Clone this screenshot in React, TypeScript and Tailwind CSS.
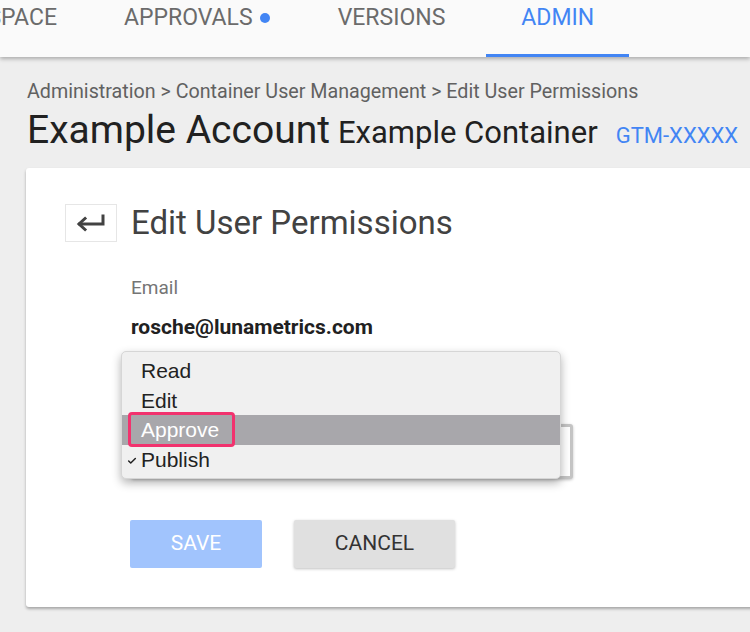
import { Check } from "lucide-react"

const tabs = [
  { label: "APPROVALS", dot: true },
  { label: "VERSIONS" },
  { label: "ADMIN", active: true },
]

const options = [
  { label: "Read" },
  { label: "Edit" },
  { label: "Approve", hover: true },
  { label: "Publish", checked: true },
]

function TopNav() {
  return (
    <div className="relative z-10 flex h-[57px] bg-[#fafafa] shadow-[0_2px_4px_rgba(0,0,0,0.28)]">
      <div className="flex w-[90px] shrink-0 justify-end pr-[33px] pt-[3px]">
        <span className="whitespace-nowrap text-[23px] leading-[30px] text-[#6b6b6b]">WORKSPACE</span>
      </div>
      {tabs.map((t) => (
        <div
          key={t.label}
          className={
            t.active
              ? "ml-[7px] flex items-start px-[35px] pt-[3px] border-b-[3px] border-[#4285f4]"
              : "flex items-start px-[34px] pt-[3px]"
          }
        >
          <span className={t.active ? "text-[23px] leading-[30px] text-[#4285f4]" : "text-[23px] leading-[30px] text-[#6b6b6b]"}>
            {t.label}
          </span>
          {t.dot && <span className="ml-[7px] mt-[10px] h-[10px] w-[10px] rounded-full bg-[#4285f4]" />}
        </div>
      ))}
    </div>
  )
}

function PermissionSelect() {
  return (
    <div className="relative ml-[95px] mt-[11px] h-[128px] w-[452px]">
      {/* the select box underneath the open menu */}
      <div className="absolute left-[10px] right-0 top-[73px] h-[55px] rounded-[3px] border-[3px] border-[#c4c4c4] bg-white shadow-[0_1px_3px_rgba(0,0,0,0.25)]" />

      {/* open menu */}
      <div
        className="absolute left-0 top-0 w-[440px] rounded-[5px] border border-[#d6d6d6] bg-[#f0f0f0] py-[4px] shadow-[0_4px_10px_rgba(0,0,0,0.3)]"
        style={{ fontFamily: '"Liberation Sans", Arial, sans-serif' }}
      >
        {options.map((o) => (
          <div
            key={o.label}
            className={
              o.hover
                ? "relative flex h-[29.5px] items-center bg-[#a8a7ab] pl-[19px] text-[21px] text-white"
                : "relative flex h-[29.5px] items-center pl-[19px] text-[21px] text-[#222222]"
            }
          >
            {o.checked && (
              <Check className="absolute left-[5px] top-[11px] h-[10px] w-[10px] text-[#222222]" strokeWidth={3.5} />
            )}
            {o.label}
            {o.hover && (
              <span className="pointer-events-none absolute left-[6px] top-[-3px] h-[35px] w-[107px] rounded-[4px] border-[3px] border-[#f2326e]" />
            )}
          </div>
        ))}
      </div>
    </div>
  )
}

export default function App() {
  return (
    <div
      className="relative h-[632px] w-[750px] overflow-hidden bg-[#eeeeee]"
      style={{ fontFamily: "Roboto, 'Noto Sans', sans-serif" }}
    >
      <TopNav />

      <div className="px-[27px] pt-[23px]">
        <div className="whitespace-nowrap text-[19.7px] leading-[24px] text-[#616161]">
          Administration &gt; Container User Management &gt; Edit User Permissions
        </div>
        <div className="mt-[4px] flex h-[44px] items-baseline whitespace-nowrap">
          <span className="text-[39px] leading-[44px] text-[#212121]">Example Account</span>
          <span className="ml-[8px] text-[31px] text-[#212121]">Example Container</span>
          <span className="ml-[18px] text-[22px] text-[#4285f4]">GTM-XXXXX</span>
        </div>
      </div>

      <div className="ml-[26px] mt-[16px] h-[439px] w-[760px] rounded-[3px] bg-white shadow-[0_2px_3px_rgba(0,0,0,0.3)]">
        <div className="flex items-center pl-[39px] pt-[36px]">
          <div className="flex h-[38px] w-[52px] shrink-0 items-center justify-center border border-[#e6e6e6]">
            <svg width="30" height="18" viewBox="0 0 30 18" fill="none" stroke="#424242" strokeWidth="3" strokeLinecap="square">
              <path d="M27 2 V10 H4" />
              <path d="M9 4.5 L3 10 L9 15.5" strokeLinejoin="miter" />
            </svg>
          </div>
          <h1 className="ml-[14px] text-[33px] leading-[38px] font-normal text-[#424242]">Edit User Permissions</h1>
        </div>

        <div className="pl-[105px]">
          <div className="mt-[34px] text-[19px] leading-[24px] text-[#757575]">Email</div>
          <div className="mt-[14px] text-[21px] leading-[26px] font-bold text-[#212121]">rosche@lunametrics.com</div>
        </div>

        <PermissionSelect />

        <div className="ml-[104px] mt-[41px] flex gap-[32px]">
          <button className="h-[48px] w-[132px] rounded-[2px] bg-[#a1c4fd] text-[21px] text-white">SAVE</button>
          <button className="h-[48px] w-[161px] rounded-[2px] bg-[#e0e0e0] text-[21px] text-[#333333] shadow-[0_1px_3px_rgba(0,0,0,0.25)]">
            CANCEL
          </button>
        </div>
      </div>
    </div>
  )
}
